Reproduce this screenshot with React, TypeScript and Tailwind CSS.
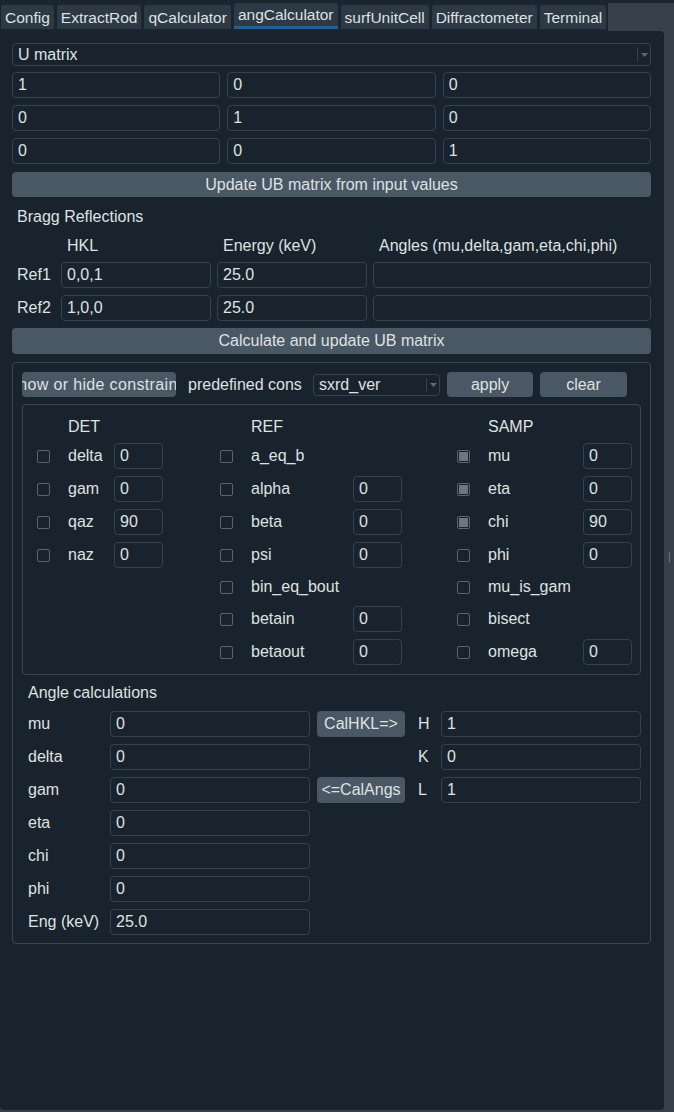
import React from "react";

const tabs = ["Config", "ExtractRod", "qCalculator", "angCalculator", "surfUnitCell", "Diffractometer", "Terminal"];

const Field = ({value, className = ""}: {value: string; className?: string}) => (
    <input
        readOnly
        value={value}
        className={`h-[26px] border border-[#34424e] rounded-[4px] bg-transparent pl-[5px] text-[#dfe1e2] outline-none ${className}`}
    />
);

const Btn = ({children, className = ""}: {children: React.ReactNode; className?: string}) => (
    <button className={`bg-[#4a5764] rounded-[4px] text-[#dfe1e2] flex items-center justify-center whitespace-nowrap overflow-hidden ${className}`}>
        {children}
    </button>
);

const Combo = ({value, className = ""}: {value: string; className?: string}) => (
    <div className={`border border-[#34424e] rounded-[4px] flex items-center ${className}`}>
        <span className="flex-1 pl-[5px]">{value}</span>
        <span className="w-[13px] h-[70%] border-l border-[#34424e] flex items-center justify-center">
            <svg width="7" height="4" viewBox="0 0 7 4">
                <path d="M0 0h7L3.5 4z" fill="#5d6873"/>
            </svg>
        </span>
    </div>
);

const Check = ({checked}: {checked?: boolean}) => (
    <span className="w-[13px] h-[13px] shrink-0 border border-[#5a6570] rounded-[2px] flex items-center justify-center">
        {checked ? <span className="w-[9px] h-[9px] bg-[#6f767d]"/> : null}
    </span>
);

type Row = {label: string; value?: string; checked?: boolean; short?: boolean};

const ConsColumn = ({title, rows, labelW, className = ""}: {title: string; rows: Row[]; labelW: string; className?: string}) => (
    <div className={`flex flex-col ${className}`}>
        <div className="h-[20px] leading-[20px] pl-[31px]">{title}</div>
        <div className="flex flex-col gap-[7px] mt-[6px]">
            {rows.map((r) => (
                <div key={r.label} className={`flex items-center ${r.short ? "h-[24px]" : "h-[26px]"}`}>
                    <Check checked={r.checked}/>
                    <span className={`ml-[18px] ${labelW}`}>{r.label}</span>
                    {r.value !== undefined ? <Field value={r.value} className="w-[49px]"/> : null}
                </div>
            ))}
        </div>
    </div>
);

const angles = [
    {label: "mu", value: "0", btn: "CalHKL=>", hkl: ["H", "1"]},
    {label: "delta", value: "0", hkl: ["K", "0"]},
    {label: "gam", value: "0", btn: "<=CalAngs", hkl: ["L", "1"]},
    {label: "eta", value: "0"},
    {label: "chi", value: "0"},
    {label: "phi", value: "0"},
    {label: "Eng (keV)", value: "25.0"},
] as {label: string; value: string; btn?: string; hkl?: string[]}[];

export default function App() {
    return (
        <div className="w-[674px] h-[1112px] bg-[#37414b] flex flex-col text-[16px] text-[#dfe1e2] font-['Liberation_Sans',Arial,sans-serif] overflow-hidden">
            <div className="h-[3px] bg-[#1b2530] shrink-0"/>
            <div className="h-[28px] flex shrink-0">
                <div className="flex items-start gap-[3px] pl-[1px] pr-[2px] bg-[#1b2530] text-[15.5px]">
                    {tabs.map((t) => t === "angCalculator" ? (
                        <div key={t} className="h-[26px] px-[4px] pt-[1px] bg-[#2d3944] rounded-t-[3px] border-b-[3px] border-[#23609a] flex items-center">{t}</div>
                    ) : (
                        <div key={t} className="h-[24px] mt-[2px] px-[4px] pt-[1px] bg-[#2d3944] rounded-t-[3px] flex items-center">{t}</div>
                    ))}
                </div>
            </div>
            <div className="flex flex-1">
                <div className="w-[664px] mb-[2px] bg-[#19232d] rounded-tr-[4px] rounded-b-[4px] pl-[12px] pr-[13px] pt-[12px] flex flex-col">
                    <Combo value="U matrix" className="h-[23px]"/>
                    <div className="grid grid-cols-3 gap-[7px] mt-[6px]">
                        {["1", "0", "0", "0", "1", "0", "0", "0", "1"].map((v, i) => (
                            <Field key={i} value={v} className="w-full"/>
                        ))}
                    </div>
                    <Btn className="h-[25px] mt-[8px]">Update UB matrix from input values</Btn>
                    <div className="h-[20px] leading-[20px] mt-[10px] pl-[5px]">Bragg Reflections</div>
                    <div className="grid grid-cols-[43px_150px_150px_1fr] gap-x-[6px] mt-[9px] items-center">
                        <div className="h-[20px]"/>
                        <div className="h-[20px] leading-[20px] pl-[6px]">HKL</div>
                        <div className="h-[20px] leading-[20px] pl-[6px]">Energy (keV)</div>
                        <div className="h-[20px] leading-[20px] pl-[6px]">Angles (mu,delta,gam,eta,chi,phi)</div>
                        <div className="pl-[5px] mt-[6px]">Ref1</div>
                        <Field value="0,0,1" className="w-full mt-[6px]"/>
                        <Field value="25.0" className="w-full mt-[6px]"/>
                        <Field value="" className="w-full mt-[6px]"/>
                        <div className="pl-[5px] mt-[7px]">Ref2</div>
                        <Field value="1,0,0" className="w-full mt-[7px]"/>
                        <Field value="25.0" className="w-full mt-[7px]"/>
                        <Field value="" className="w-full mt-[7px]"/>
                    </div>
                    <Btn className="h-[26px] mt-[7px]">Calculate and update UB matrix</Btn>

                    <div className="mt-[8px] border border-[#3a4854] rounded-[4px] px-[9px] pt-[9px] pb-[8px] flex flex-col">
                        <div className="h-[25px] flex items-center">
                            <Btn className="w-[154px] h-[25px]">
                                <span className="shrink-0 tracking-[0.35px]">Show or hide constraints</span>
                            </Btn>
                            <span className="w-[137px] pl-[12px]">predefined cons</span>
                            <Combo value="sxrd_ver" className="w-[127px] h-[22px]"/>
                            <Btn className="w-[86px] h-[25px] ml-[7px]">apply</Btn>
                            <Btn className="w-[87px] h-[25px] ml-[7px]">clear</Btn>
                        </div>
                        <div className="mt-[7px] border border-[#3a4854] rounded-[4px] pl-[14px] pt-[12px] pb-[9px] flex">
                            <ConsColumn
                                title="DET"
                                labelW="w-[46px]"
                                className="w-[126px]"
                                rows={[
                                    {label: "delta", value: "0"},
                                    {label: "gam", value: "0"},
                                    {label: "qaz", value: "90"},
                                    {label: "naz", value: "0"},
                                ]}
                            />
                            <ConsColumn
                                title="REF"
                                labelW="w-[102px]"
                                className="w-[182px] ml-[57px]"
                                rows={[
                                    {label: "a_eq_b"},
                                    {label: "alpha", value: "0"},
                                    {label: "beta", value: "0"},
                                    {label: "psi", value: "0"},
                                    {label: "bin_eq_bout", short: true},
                                    {label: "betain", value: "0"},
                                    {label: "betaout", value: "0"},
                                ]}
                            />
                            <ConsColumn
                                title="SAMP"
                                labelW="w-[95px]"
                                className="w-[175px] ml-[55px]"
                                rows={[
                                    {label: "mu", value: "0", checked: true},
                                    {label: "eta", value: "0", checked: true},
                                    {label: "chi", value: "90", checked: true},
                                    {label: "phi", value: "0"},
                                    {label: "mu_is_gam", short: true},
                                    {label: "bisect"},
                                    {label: "omega", value: "0"},
                                ]}
                            />
                        </div>
                        <div className="h-[20px] leading-[20px] mt-[8px] pl-[6px]">Angle calculations</div>
                        <div className="flex flex-col gap-[7px] mt-[8px]">
                            {angles.map((a) => (
                                <div key={a.label} className="h-[26px] flex items-center">
                                    <span className="w-[88px] pl-[6px]">{a.label}</span>
                                    <Field value={a.value} className="w-[200px]"/>
                                    {a.btn ? <Btn className="w-[88px] h-[26px] ml-[7px]">{a.btn}</Btn> : <span className="w-[88px] ml-[7px]"/>}
                                    {a.hkl ? (
                                        <>
                                            <span className="w-[36px] pl-[13px]">{a.hkl[0]}</span>
                                            <Field value={a.hkl[1]} className="w-[200px]"/>
                                        </>
                                    ) : null}
                                </div>
                            ))}
                        </div>
                    </div>
                </div>
                <div className="flex-1 flex justify-center">
                    <span className="w-[1px] h-[10px] mt-[521px] bg-[#6a747e]"/>
                </div>
            </div>
        </div>
    );
}
